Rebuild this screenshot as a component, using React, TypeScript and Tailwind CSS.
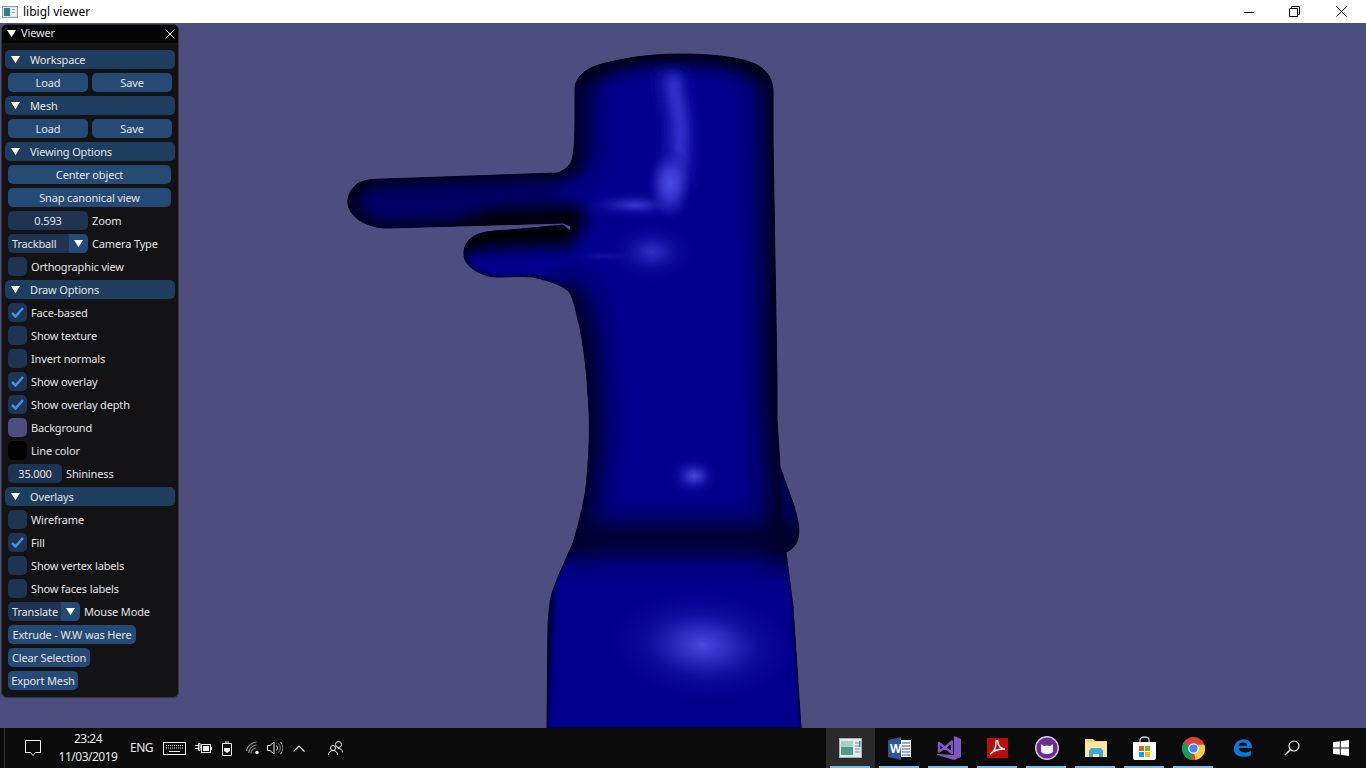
import React from "react";

const FONT = { fontFamily: '"Noto Sans", "Open Sans", sans-serif' };

function Tri({ size = 9 }: { size?: number }) {
  return (
    <svg width={size} height={size * 0.8} viewBox="0 0 10 8" className="shrink-0">
      <path d="M0 0H10L5 8Z" fill="#fff" />
    </svg>
  );
}

function Header({ label }: { label: string }) {
  return (
    <div className="mx-[3px] flex h-[19px] items-center rounded-[5px] bg-[#1f3d5f] pl-[6px]">
      <Tri />
      <span className="ml-[10px]">{label}</span>
    </div>
  );
}

function Btn({ label, className = "" }: { label: string; className?: string }) {
  return (
    <div className={`flex h-[19px] items-center justify-center rounded-[5px] bg-[#254a75] ${className}`}>{label}</div>
  );
}

function Check({ label, on = false, color }: { label: string; on?: boolean; color?: string }) {
  const bg = color ?? "bg-[#1f3352]";
  return (
    <div className="ml-[6px] flex h-[19px] items-center">
      <div className={`flex h-[19px] w-[19px] items-center justify-center rounded-[5px] ${bg}`}>
        {on && (
          <svg width="13" height="11" viewBox="0 0 13 11">
            <path d="M1 6l3.500 3.500L12 1" fill="none" stroke="#3f92f2" strokeWidth="2.500" />
          </svg>
        )}
      </div>
      <span className="ml-1">{label}</span>
    </div>
  );
}

function Combo({ value, label, w }: { value: string; label: string; w: string }) {
  return (
    <div className="ml-[6px] flex h-[19px] items-center">
      <div className={`flex h-[19px] items-center overflow-hidden rounded-[5px] bg-[#1f3352] ${w}`}>
        <span className="flex-1 pl-1">{value}</span>
        <div className="flex h-full w-[19px] items-center justify-center bg-[#254a75]">
          <Tri />
        </div>
      </div>
      <span className="ml-1">{label}</span>
    </div>
  );
}

function Num({ value, label, w }: { value: string; label: string; w: string }) {
  return (
    <div className="ml-[6px] flex h-[19px] items-center">
      <div className={`flex h-[19px] items-center justify-center rounded-[5px] bg-[#1f3352] ${w}`}>{value}</div>
      <span className="ml-1">{label}</span>
    </div>
  );
}

function Panel() {
  return (
    <div
      style={FONT}
      className="absolute left-px top-px flex h-[674px] w-[178px] flex-col rounded-[6px] border border-[#33333d] bg-[#131316] text-[11px] leading-none tracking-[-0.15px] text-[#e4e4e4]"
    >
      <div className="flex h-[18px] shrink-0 items-center rounded-t-[5px] bg-[#040404] pb-[1px] pl-[5px] pr-[3px]">
        <Tri />
        <span className="mb-[2px] ml-[5px]">Viewer</span>
        <svg width="10" height="10" viewBox="0 0 10 10" className="ml-auto">
          <path d="M.5.5l9 9M9.500.5l-9 9" stroke="#fff" strokeWidth="1" />
        </svg>
      </div>
      <div className="flex flex-col gap-1 pt-[7px]">
        <Header label="Workspace" />
        <div className="ml-[6px] flex gap-1">
          <Btn label="Load" className="w-20" />
          <Btn label="Save" className="w-20" />
        </div>
        <Header label="Mesh" />
        <div className="ml-[6px] flex gap-1">
          <Btn label="Load" className="w-20" />
          <Btn label="Save" className="w-20" />
        </div>
        <Header label="Viewing Options" />
        <Btn label="Center object" className="ml-[6px] w-[163px]" />
        <Btn label="Snap canonical view" className="ml-[6px] w-[163px]" />
        <Num value="0.593" label="Zoom" w="w-20" />
        <Combo value="Trackball" label="Camera Type" w="w-20" />
        <Check label="Orthographic view" />
        <Header label="Draw Options" />
        <Check label="Face-based" on />
        <Check label="Show texture" />
        <Check label="Invert normals" />
        <Check label="Show overlay" on />
        <Check label="Show overlay depth" on />
        <Check label="Background" color="bg-[#4d4d80]" />
        <Check label="Line color" color="bg-black" />
        <Num value="35.000" label="Shininess" w="w-[54px]" />
        <Header label="Overlays" />
        <Check label="Wireframe" />
        <Check label="Fill" on />
        <Check label="Show vertex labels" />
        <Check label="Show faces labels" />
        <Combo value="Translate" label="Mouse Mode" w="w-[72px]" />
        <Btn label="Extrude - W.W was Here" className="ml-[6px] w-[128px]" />
        <Btn label="Clear Selection" className="ml-[6px] w-[82px]" />
        <Btn label="Export Mesh" className="ml-[6px] w-[70px]" />
      </div>
    </div>
  );
}

const BODY =
  "M575 90C575 74 590 66 610 62C635 56 660 54 680 54C710 54 740 57 755 64C768 70 773 80 773 92L773 140L777 380L777 420L780 467L793 503C798 518 800 530 798 538C796 546 791 550 786 552L793 607L801 728L547 728L548 627C549 605 551 595 553 590L558 577L573 543C580 520 586 495 587 477C589 455 590 430 589 410L587 380C585 355 581 330 578 320C575 305 572 297 570 293C563 285 553 282 533 277C520 276 510 277 497 277C485 277 470 270 465 260C462 250 466 243 470 239C478 232 490 231 510 230L563 225L570 231L571 226L563 223L387 228C372 228 358 222 351 212C345 202 348 192 357 184C364 180 372 179 385 179L557 173C564 171 570 166 572 160C575 150 575 130 575 110Z";

function Blur({ id, d }: { id: string; d: number }) {
  return (
    <filter id={id} filterUnits="userSpaceOnUse" x="300" y="0" width="600" height="760">
      <feGaussianBlur stdDeviation={d} />
    </filter>
  );
}

function Mesh() {
  const D = "#00001e";
  return (
    <svg viewBox="0 23 1366 705" className="absolute inset-0 h-full w-full">
      <defs>
        <clipPath id="c">
          <path d={BODY} />
        </clipPath>
        <Blur id="b2" d={2} />
        <Blur id="b3" d={3} />
        <Blur id="b5" d={5} />
        <Blur id="b7" d={7} />
        <Blur id="b12" d={12} />
        <Blur id="b14" d={14} />
        <radialGradient id="spot">
          <stop offset="0" stopColor="#4c4ce8" />
          <stop offset="0.4" stopColor="#3a3ad4" stopOpacity="0.85" />
          <stop offset="0.75" stopColor="#1c1cb0" stopOpacity="0.45" />
          <stop offset="1" stopColor="#00008c" stopOpacity="0" />
        </radialGradient>
        <radialGradient id="soft">
          <stop offset="0" stopColor="#4a4ae4" />
          <stop offset="0.25" stopColor="#3636cc" stopOpacity="0.8" />
          <stop offset="0.55" stopColor="#1c1cb0" stopOpacity="0.42" />
          <stop offset="1" stopColor="#00008c" stopOpacity="0" />
        </radialGradient>
      </defs>
      <path d={BODY} fill="#00008c" />
      <g clipPath="url(#c)" fill="none">
        {/* sides */}
        <path d="M570 50V170" stroke={D} strokeWidth="40" filter="url(#b12)" opacity="0.9" />
        <path d="M562 285L578 340L583 430L578 490L562 545" stroke={D} strokeWidth="42" filter="url(#b12)" opacity="0.9" />
        <path d="M552 590L545 728" stroke={D} strokeWidth="6" filter="url(#b2)" opacity="0.7" />
        <path d="M786 50L788 400L792 480L796 560" stroke={D} strokeWidth="52" filter="url(#b12)" />
        <path d="M792 570L803 728" stroke={D} strokeWidth="5" filter="url(#b2)" opacity="0.7" />
        <path d="M780 470L798 520L798 540L786 552Z" fill="#000064" filter="url(#b2)" />
        {/* cap */}
        <path d="M575 80C590 58 640 50 680 50C710 50 760 56 773 80" stroke={D} strokeWidth="30" filter="url(#b7)" />
        {/* nose */}
        <path d="M345 203L565 197" stroke="#000048" strokeWidth="56" filter="url(#b12)" opacity="0.6" />
        <path d="M343 205C345 174 370 170 390 170L558 164L572 156" stroke="#00000c" strokeWidth="28" filter="url(#b7)" />
        <path d="M343 205C348 234 372 238 390 237L575 232" stroke="#00000c" strokeWidth="28" filter="url(#b7)" />
        <path d="M458 255C460 226 490 222 510 221L585 218" stroke="#00000c" strokeWidth="24" filter="url(#b7)" />
        <path d="M458 255C465 282 490 285 510 284L535 284C552 288 565 296 572 304" stroke={D} strokeWidth="12" filter="url(#b3)" opacity="0.9" />
        {/* dark belt */}
        <rect x="500" y="524" width="340" height="30" fill="#000026" stroke="none" filter="url(#b14)" />
        <rect x="500" y="532" width="340" height="14" fill="#000026" stroke="none" filter="url(#b7)" opacity="0.5" />
        {/* highlights */}
        <path d="M672 72C670 95 680 110 679 130C677 150 681 165 676 185" stroke="#2a2ac4" strokeWidth="26" filter="url(#b7)" opacity="0.7" />
        <path d="M674 76C673 95 681 110 681 130C679 150 682 165 674 185" stroke="#4040dc" strokeWidth="9" filter="url(#b5)" opacity="0.8" />
        <ellipse cx="635" cy="205" rx="64" ry="16" fill="url(#soft)" opacity="0.75" />
        <ellipse cx="670" cy="184" rx="24" ry="38" fill="url(#spot)" />
        <ellipse cx="652" cy="252" rx="50" ry="34" fill="url(#soft)" opacity="0.65" />
        <ellipse cx="605" cy="256" rx="50" ry="8" fill="url(#soft)" opacity="0.25" />
        <ellipse cx="694" cy="476" rx="28" ry="22" fill="url(#soft)" />
        <ellipse cx="703" cy="645" rx="104" ry="62" fill="url(#soft)" transform="rotate(4 703 645)" />
      </g>
      <path d={BODY} fill="none" stroke="#00001c" strokeWidth="1" />
    </svg>
  );
}

function TitleBar() {
  return (
    <div style={FONT} className="flex h-[23px] shrink-0 items-center bg-white text-[12px] text-black">
      <svg width="16" height="14" viewBox="0 0 16 14" className="ml-[2px]">
        <rect x="0.5" y="1.500" width="15" height="11" fill="#dfe6e8" stroke="#8aa0a8" />
        <rect x="2" y="3" width="6" height="8" fill="#2f7f86" />
        <rect x="9" y="3" width="5" height="8" fill="#f2f4f4" />
        <rect x="10" y="4" width="3" height="1" fill="#99aabb" />
        <rect x="10" y="7" width="3" height="1" fill="#99aabb" />
      </svg>
      <span className="ml-[5px]">libigl viewer</span>
      <div className="ml-auto flex items-center">
        <svg width="10" height="10" viewBox="0 0 10 10"><path d="M0 5.500H10" stroke="#000" /></svg>
        <svg width="11" height="11" viewBox="0 0 11 11" className="ml-[35px]">
          <path d="M.5 2.500h8v8h-8zM2.500 2.500v-2h8v8h-2" fill="none" stroke="#000" />
        </svg>
        <svg width="11" height="11" viewBox="0 0 11 11" className="ml-[36px] mr-[19px]">
          <path d="M.5.5l10 10M10.500.5l-10 10" stroke="#000" />
        </svg>
      </div>
    </div>
  );
}

function Tray() {
  const s = "#f0f0f0";
  return (
    <div className="flex items-center text-[12px] tracking-[-0.5px]">
      <div className="ml-1 h-full w-px self-stretch bg-[#333]" />
      <svg width="17" height="18" viewBox="0 0 17 18" className="ml-5">
        <path d="M.5 1.500h15v12h-5l-2.500 3-2.500-3h-5z" fill="none" stroke={s} />
      </svg>
      <div className="ml-4 flex w-[60px] flex-col items-center leading-[18px]">
        <span>23:24</span>
        <span>11/03/2019</span>
      </div>
      <span className="ml-3 w-[23px]">ENG</span>
      <svg width="23" height="13" viewBox="0 0 23 13" className="ml-[10px]">
        <rect x=".5" y=".5" width="22" height="12" fill="none" stroke={s} />
        <path d="M3 3.500h17M3 6h17" stroke={s} strokeDasharray="1 1" />
        <path d="M6 9.500h11" stroke={s} />
      </svg>
      <svg width="17" height="13" viewBox="0 0 17 13" className="ml-[9px]">
        <path d="M0 3.500h3M0 6.500h3M3.500 1.500h1.500v7H3.500zM5 5h2" stroke={s} fill="none" />
        <rect x="6.500" y="2.500" width="9" height="8" fill="none" stroke={s} />
        <rect x="8" y="4" width="6" height="5" fill={s} />
        <rect x="16" y="5" width="1" height="3" fill={s} />
      </svg>
      <svg width="10" height="15" viewBox="0 0 10 15" className="ml-[10px]">
        <path d="M3 1h4M.5 2.500h9v12h-9z" fill="none" stroke={s} />
        <path d="M2 7h6v3l-3 2-3-2z" fill={s} />
      </svg>
      <svg width="14" height="14" viewBox="0 0 14 14" className="ml-[14px]">
        <path d="M.5 10a11 11 0 0 1 10-9M2.500 12a9 9 0 0 1 8-8M5 12.500a6 6 0 0 1 5-5.500" fill="none" stroke="#8a8a8a" strokeWidth="1.200" />
        <circle cx="11" cy="11.500" r="1.700" fill={s} />
      </svg>
      <svg width="16" height="14" viewBox="0 0 16 14" className="ml-[7px]">
        <path d="M.5 4.500h2.500l4-3.500v12l-4-3.500H.5z" fill="none" stroke={s} />
        <path d="M9.500 4.500a3.500 3.500 0 0 1 0 5" fill="none" stroke={s} />
        <path d="M11.500 2.500a6.500 6.500 0 0 1 0 9M13.500 1a9 9 0 0 1 0 12" fill="none" stroke="#8a8a8a" />
      </svg>
      <svg width="12" height="7" viewBox="0 0 12 7" className="ml-[10px]">
        <path d="M.5 6.500L6 1l5.500 5.500" fill="none" stroke={s} strokeWidth="1.200" />
      </svg>
      <svg width="15" height="15" viewBox="0 0 15 15" className="ml-[23px]">
        <circle cx="10.500" cy="3.500" r="3" fill="none" stroke={s} />
        <circle cx="5" cy="7" r="2.500" fill="none" stroke={s} />
        <path d="M.5 14c0-3 2-4.500 4.500-4.500S9.500 11 9.500 14M10 7.500c3 0 4.500 1.500 4.500 4" fill="none" stroke={s} />
      </svg>
    </div>
  );
}

const apps: React.ReactNode[] = [
  <svg key="a" width="23" height="20" viewBox="0 0 23 20">
    <rect x=".5" y=".5" width="22" height="19" fill="#e4e9ea" stroke="#a4b0b4" />
    <rect x="2" y="3" width="12" height="14" fill="#4b9a90" />
    <rect x="2" y="3" width="12" height="6" fill="#a9d2c4" />
    <path d="M16 5h5M16 8h5M16 11h5M16 14h5" stroke="#7f8f93" />
    <rect x="20" y="3" width="1.500" height="6" fill="#3f8f8a" />
  </svg>,
  <svg key="w" width="23" height="23" viewBox="0 0 23 23">
    <path d="M12 3h11v17H12z" fill="#fff" />
    <path d="M14 6h8M14 9h8M14 12h8M14 15h8M14 18h8" stroke="#2b579a" />
    <path d="M0 3L13 0v23L0 20z" fill="#2b579a" />
    <text x="2" y="16" fontSize="12" fontWeight="700" fill="#fff" fontFamily="Liberation Sans">W</text>
  </svg>,
  <svg key="v" width="24" height="24" viewBox="0 0 24 24">
    <path d="M17 0L24 3V21L17 24L0 19V18L17 19Z" fill="#7e57c2" />
    <path d="M2 7L8 11.500L15 5.500V17L8 11.500L2 15.500Z" fill="none" stroke="#7e57c2" strokeWidth="2.400" strokeLinejoin="round" />
  </svg>,
  <svg key="p" width="21" height="20" viewBox="0 0 21 20">
    <rect width="21" height="20" fill="#bb0c12" />
    <path d="M3 16c4-2 6-7 6-12 0-2 2-2 2 0 0 4 3 7 7 7-5 0-11 1-15 5" fill="none" stroke="#fff" strokeWidth="1.400" />
  </svg>,
  <svg key="c" width="24" height="24" viewBox="0 0 24 24">
    <circle cx="12" cy="12" r="11.300" fill="#6a2e92" stroke="#cfc8d6" strokeWidth="1.500" />
    <path d="M6 8l3 2c2-.7 4-.7 6 0l3-2v7c0 2-3 3-6 3s-6-1-6-3z" fill="#f4eef8" />
  </svg>,
  <svg key="f" width="22" height="18" viewBox="0 0 22 18">
    <path d="M0 0h8l2 2h12v16H0z" fill="#f3d27a" />
    <rect y="3" width="22" height="15" fill="#fae7a3" />
    <path d="M4 18v-6l2-3h10l2 3v6h-4v-3H8v3z" fill="#3fa7d6" />
  </svg>,
  <svg key="s" width="23" height="24" viewBox="0 0 23 24">
    <path d="M7 7V4c0-4 9-4 9 0v3" fill="none" stroke="#cfcfcf" strokeWidth="1.300" />
    <path d="M0 6h23v16a2 2 0 0 1-2 2H2a2 2 0 0 1-2-2z" fill="#fff" />
    <rect x="6" y="10" width="5" height="5" fill="#f25022" />
    <rect x="12" y="10" width="5" height="5" fill="#7fba00" />
    <rect x="6" y="16" width="5" height="5" fill="#00a4ef" />
    <rect x="12" y="16" width="5" height="5" fill="#ffb900" />
  </svg>,
  <svg key="ch" width="23" height="23" viewBox="0 0 24 24">
    <circle cx="12" cy="12" r="12" fill="#db4437" />
    <path d="M12 12L1.700 5.800A12 12 0 0 0 9 23.600z" fill="#0f9d58" />
    <path d="M12 12l2 11.800A12 12 0 0 0 23.500 8H12z" fill="#ffcd40" />
    <circle cx="12" cy="12" r="5.500" fill="#fff" />
    <circle cx="12" cy="12" r="4.300" fill="#4285f4" />
  </svg>,
];

function Taskbar() {
  return (
    <div style={FONT} className="flex h-10 shrink-0 items-stretch bg-[#0b0b0b] text-[#e8e8e8]">
      <Tray />
      <div className="ml-auto flex items-stretch">
        {apps.map((a, i) => (
          <div key={i} className={`relative flex w-[49px] items-center justify-center ${i === 0 ? "bg-[#2b2b2b]" : ""}`}>
            {a}
            <div className="absolute bottom-0 left-1 right-[5px] h-[2px] bg-[#76b9ed]" />
          </div>
        ))}
        <div className="flex w-[49px] items-center justify-center">
          <svg width="21" height="22" viewBox="0 0 24 24">
            <path d="M2 13.500C2 6 8 2 13 2c7 0 10 5 10 10H7.500c.5 5.500 9 6.500 14 3v5.500C14 24 2 22 2 13.500zM7.500 9.500h10c0-5-9.500-5-10 0z" fill="#0a78d7" />
          </svg>
        </div>
        <div className="flex w-[50px] items-center justify-center">
          <svg width="16" height="16" viewBox="0 0 16 16">
            <circle cx="10" cy="6" r="5" fill="none" stroke="#eeeeee" strokeWidth="1.200" />
            <path d="M6.500 9.500L1 15" stroke="#eeeeee" strokeWidth="1.500" />
          </svg>
        </div>
        <div className="flex w-[49px] items-center justify-center pr-[2px]">
          <svg width="16" height="16" viewBox="0 0 16 16">
            <path d="M0 2.300L6.800 1.300V7.500H0zM7.700 1.200L16 0V7.500H7.700zM0 8.500H6.800V14.700L0 13.700zM7.700 8.500H16V16L7.700 14.800z" fill="#fff" />
          </svg>
        </div>
      </div>
    </div>
  );
}

export default function App() {
  return (
    <div className="flex h-screen w-full flex-col overflow-hidden">
      <TitleBar />
      <div className="relative flex-1 bg-[#4d4d80]">
        <Mesh />
        <Panel />
      </div>
      <Taskbar />
    </div>
  );
}
